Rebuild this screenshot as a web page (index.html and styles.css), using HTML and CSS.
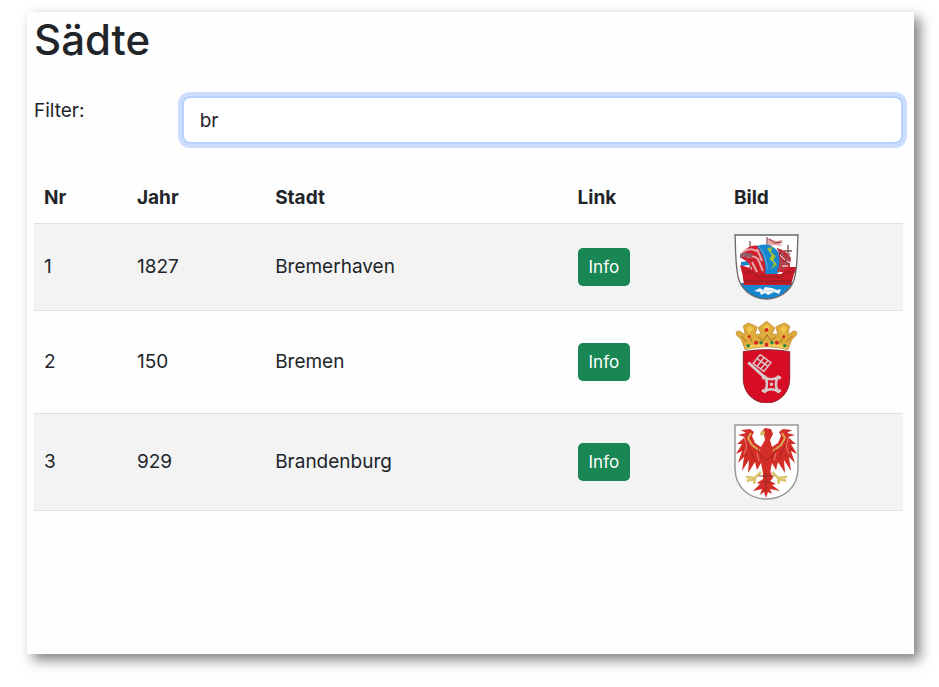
FILE: index.html
```html
<!DOCTYPE html>
<html lang="de">
<head>
<meta charset="utf-8">
<meta name="viewport" content="width=device-width, initial-scale=1">
<title>Sädte</title>
<link rel="stylesheet" href="styles.css">
</head>
<body>
<main class="card">
  <h1>Sädte</h1>
  <div class="filter">
    <label for="filter">Filter:</label>
    <input id="filter" type="text" value="br">
  </div>
  <table>
    <colgroup>
      <col class="col-nr"><col class="col-year"><col class="col-city"><col class="col-link"><col class="col-image">
    </colgroup>
    <thead>
      <tr><th scope="col">Nr</th><th scope="col">Jahr</th><th scope="col">Stadt</th><th scope="col">Link</th><th scope="col">Bild</th></tr>
    </thead>
    <tbody>
      <tr>
        <td>1</td><td>1827</td><td>Bremerhaven</td><td><a class="btn" href="#bremerhaven">Info</a></td>
        <td>
          <svg class="crest" width="65" height="66" viewBox="0 0 65 66" aria-hidden="true">
            <defs><clipPath id="shield1"><path d="M1 1H64C63 17 64 34 60 46C56 58 44 65 32.500 65C21 65 9 58 5 46C1 34 2 17 1 1Z"/></clipPath></defs>
            <g clip-path="url(#shield1)">
              <path d="M0 0H65V66H0Z" fill="#fff"/>
              <path d="M0 49H65V66H0Z" fill="#1686ce"/>
              <path d="M7 28L14 27L15 31L7 32Z" fill="#1686ce"/>
              <path d="M16 7V40M33 3V44M54 11V40" stroke="#8b6a66" stroke-width="1.500"/>
              <path d="M50 17H58" stroke="#7b5148" stroke-width="1.500"/>
              <path d="M34 4L42 7L49 6L46 10L49 12L39 11L34 13Z" fill="#e5a5a6"/>
              <path d="M35 5L41 9L48 8" fill="none" stroke="#982d35"/>
              <path d="M7 20Q17 8 27 13L31 28L34 43L18 40Q20 30 7 24Z" fill="#cf1e2c"/>
              <path d="M9 18Q15 13 23 17M13 23Q20 21 24 25L29 37M18 28L23 38M23 15L28 27" fill="none" stroke="#e7a7a9" stroke-width="2"/>
              <path d="M6 20Q14 17 19 21L17 24Q12 22 6 24Z" fill="#8d6069"/>
              <path d="M23 12Q37 7 44 18Q50 31 41 44L30 43Q35 29 23 12Z" fill="#1686ce"/>
              <path d="M24 12Q30 17 32 27L34 36" fill="none" stroke="#63aadb"/>
              <path d="M33 14L39 13L37 18L42 22L39 27L43 31L37 35L40 29L35 25L38 21Z" fill="#8ab934"/>
              <path d="M34 15L39 22L38 26L42 30" fill="none" stroke="#e3d335"/>
              <path d="M43 14Q52 16 57 24L55 38H43Q48 27 43 14Z" fill="#c32c35"/>
              <path d="M43 15L56 28M49 18L45 39M56 19L49 35M48 29H56" stroke="#8c676a"/>
              <path d="M46 21L51 26M48 32H54M53 27L58 30" stroke="#fff"/>
              <path d="M6 31L16 34L22 40H47L54 33H63L60 40L57 51H10Q9 40 6 31Z" fill="#c91a25"/>
              <path d="M11 38H19L23 43H46L53 38H61M10 47H58" fill="none" stroke="#8e1f29"/>
              <path d="M9 50L15 46L22 50L29 47L36 50L44 47L56 50" fill="none" stroke="#a51f28"/>
              <path d="M20 57L26 54L29 56L31 53L38 54L43 56L47 55L45 60L40 58L34 61L31 59L27 61L26 58Z" fill="#f2f5f6"/>
              <path d="M27 57H41" stroke="#c3dae7"/>
            </g>
            <path d="M1 1H64C63 17 64 34 60 46C56 58 44 65 32.500 65C21 65 9 58 5 46C1 34 2 17 1 1Z" fill="none" stroke="#666" stroke-width="1.300"/>
          </svg>
        </td>
      </tr>
      <tr>
        <td>2</td><td>150</td><td>Bremen</td><td><a class="btn" href="#bremen">Info</a></td>
        <td>
          <svg class="crest" width="65" height="82" viewBox="0 0 65 83" aria-hidden="true">
            <path d="M11 29L7 19L2 14L2 11L5 10L11 14L10 9L9 5L14 2L19 4L23 6L21 14L27 13L24 7L28 4L32.500 0L37 4L41 7L38 13L44 14L42 6L46 4L51 2L56 5L54 14L60 10L63 11L63 14L58 19L54 29Q33 23 11 29Z" fill="#dfac3b" stroke="#bd8a2f" stroke-width=".8"/>
            <path d="M12 7L16 5L19 8L15 13ZM29 6L33 3L36 7L33 13ZM46 8L50 5L53 7L50 13Z" fill="#f2c94d"/>
            <path d="M15 16L18 21M24 16L29 20L33 14L37 20L42 16M50 16L46 22M7 15L12 21M59 15L53 21" fill="none" stroke="#9d6d2c"/>
            <path d="M12 27Q33 21 53 27" fill="none" stroke="#f3cc55" stroke-width="3"/>
            <g fill="#d22523"><circle cx="32.500" cy="9" r="2"/><circle cx="15" cy="16" r="1.500"/><circle cx="50" cy="16" r="1.500"/><circle cx="22" cy="22" r="2"/><circle cx="43" cy="22" r="2"/><circle cx="32.500" cy="24" r="2"/></g>
            <g fill="#26864a"><circle cx="14" cy="25" r="1.800"/><circle cx="27" cy="22" r="1.800"/><circle cx="38" cy="22" r="1.800"/><circle cx="51" cy="25" r="1.800"/></g>
            <path d="M9 31Q33 27 56 31V58C56 74 44 83 32.500 83C21 83 9 74 9 58Z" fill="#d60d25" stroke="#8a1c28"/>
            <g fill="none" stroke="#d9c9cc" stroke-linejoin="round">
              <path d="M14 42L34 60" stroke-width="3"/>
              <path d="M26 34L37 42L30 51L19 43Z" stroke-width="1.500"/>
              <path d="M23 38L34 46M30 37L23 46M34 40L27 48" stroke-width="1.500"/>
              <path d="M31 57Q37 61 44 57Q40 64 44 71Q37 67 31 71Q35 64 31 57Z" stroke-width="2.500"/>
              <path d="M28 58L32 56M43 56L47 58M28 70L32 72M43 72L47 70M36 64H39" stroke-width="3"/>
            </g>
          </svg>
        </td>
      </tr>
      <tr>
        <td>3</td><td>929</td><td>Brandenburg</td><td><a class="btn" href="#brandenburg">Info</a></td>
        <td>
          <svg class="crest" width="65" height="76" viewBox="0 0 65 76" aria-hidden="true">
            <path d="M1 1H64V44C64 64 49 75 32.500 75C16 75 1 64 1 44Z" fill="#fff" stroke="#999" stroke-width="1.500"/>
            <g fill="#d22d27">
              <path d="M27 8L31 4L37 5L39 10L36 16L38 23L44 19L47 12L45 8L49 5L58 6L53 9L61 11L54 13L62 20L57 20L63 30L57 27L61 39L55 33L57 47L50 36L51 49L44 38L42 46L38 39L36 49H29L27 39L23 46L21 38L14 49L15 36L8 47L10 33L4 39L8 27L2 30L8 20L3 20L11 13L4 11L12 9L7 6L16 5L20 8L18 12L21 19L27 23L31 16L30 11Z"/>
              <path d="M29 47H36L39 54L36 57L42 60L38 61L46 67L36 65L38 70L34 68L32 74L30 68L26 71L28 65L19 67L26 60L23 59L29 55Z"/>
            </g>
            <path d="M26 9L30 6L31 10L27 12Z" fill="#d5bc62"/>
            <path d="M17 9L14 14L18 21L26 27M48 9L51 14L47 21L39 27" fill="none" stroke="#dda750" stroke-width="2"/>
            <path d="M12 18L18 29L20 36M8 24L14 32M53 18L47 29L45 36M58 24L51 32M24 25L28 35M42 25L37 35M29 32L33 36L37 32" fill="none" stroke="#a92222"/>
            <path d="M10 13L13 22L10 30M55 13L52 22L55 30M23 29L25 37M42 29L40 37" fill="none" stroke="#ee8070"/>
            <path d="M27 48L21 54L12 53M21 54L13 57M21 54L20 60M38 48L44 54L53 53M44 54L52 57M44 54L45 60" fill="none" stroke="#d9c46a" stroke-width="2.500"/>
            <path d="M25 52H40M29 58H37M32 49V67" stroke="#902822"/>
          </svg>
        </td>
      </tr>
    </tbody>
  </table>
</main>
</body>
</html>
```
FILE: styles.css
```css
* {
  box-sizing: border-box;
}

body {
  margin: 0;
  min-height: 100vh;
  display: flex;
  padding: 12px 25px 33px 27px;
  background: #fff;
  color: #212529;
  font: 19px/30px Inter, "Liberation Sans", sans-serif;
}

.card {
  flex: 1;
  padding: 0 11px 24px 7px;
  background: #fefefe;
  box-shadow: 6px 6px 12px rgba(0, 0, 0, 0.5);
}

h1 {
  margin: 0 0 28px;
  font-size: 42px;
  line-height: 56px;
  font-weight: 500;
}

.filter {
  display: grid;
  grid-template-columns: 17% 1fr;
  align-items: start;
  margin-bottom: 29px;
}

.filter input {
  width: 100%;
  height: 48px;
  padding: 0 16px;
  border: 2px solid #b9d2fd;
  border-radius: 8px;
  outline: 0;
  box-shadow: 0 0 0 4px #cbdeff;
  background: #fff;
  color: inherit;
  font: inherit;
}

table {
  width: 100%;
  table-layout: fixed;
  border-collapse: separate;
  border-spacing: 0;
}

.col-nr { width: 10.7%; }
.col-year { width: 15.9%; }
.col-city { width: 34.8%; }
.col-link { width: 18%; }
.col-image { width: 20.6%; }

th,
td {
  padding: 10px;
  border-bottom: 1px solid #dee2e6;
  text-align: left;
  vertical-align: middle;
}

th {
  font-weight: 700;
}

tbody tr:nth-child(odd) {
  background: #f3f3f3;
}

.btn {
  display: inline-block;
  vertical-align: middle;
  padding: 4px 11px;
  border-radius: 5px;
  background: #198754;
  color: #fff;
  font-size: 17px;
  text-decoration: none;
}

.crest {
  display: block;
}
```
